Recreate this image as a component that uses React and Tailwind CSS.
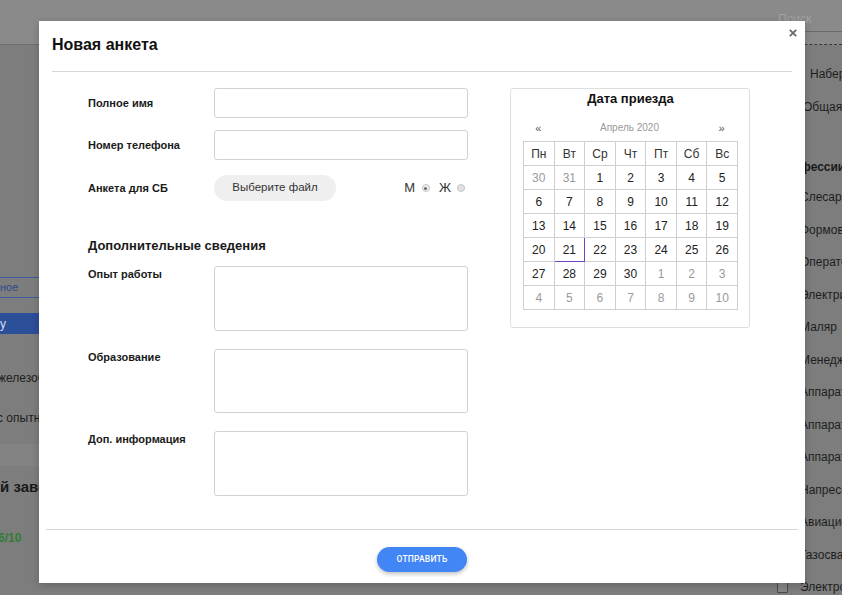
import React from "react";

const weeks = [
  [[30, 1], [31, 1], [1], [2], [3], [4], [5]],
  [[6], [7], [8], [9], [10], [11], [12]],
  [[13], [14], [15], [16], [17], [18], [19]],
  [[20], [21, 0, 1], [22], [23], [24], [25], [26]],
  [[27], [28], [29], [30], [1, 1], [2, 1], [3, 1]],
  [[4, 1], [5, 1], [6, 1], [7, 1], [8, 1], [9, 1], [10, 1]],
];
const dayNames = ["Пн", "Вт", "Ср", "Чт", "Пт", "Сб", "Вс"];
const jobs = [
  "Слесарь",
  "Формовщик",
  "Оператор",
  "Электрик",
  "Маляр",
  "Менеджер",
  "Аппаратчик",
  "Аппаратчик",
  "Аппаратчик",
  "Напрессовщик",
  "Авиационный",
  "Газосварщик",
  "Электромонтер",
];

function Calendar() {
  return (
    <div className="w-[240px] h-[240px] border border-[#dedede] rounded-[3px] pl-[12px] flex flex-col">
      <div className="mt-[1px] h-[18px] leading-[18px] text-center text-[13px] font-bold text-[#111] w-[215px]">
        Дата приезда
      </div>
      <div className="mt-[13px] h-[14px] grid grid-cols-7 w-[215px] items-center leading-[14px]">
        <div className="text-center text-[11px] text-[#555]">«</div>
        <div className="col-span-5 text-center text-[10px] text-[#999] -ml-[2px]">Апрель 2020</div>
        <div className="text-center text-[11px] text-[#555] -ml-[2px]">»</div>
      </div>
      <div className="mt-[6px] w-[215px] grid grid-cols-7 border-l border-t border-[#cfcfcf]">
        {dayNames.map((d) => (
          <div
            key={d}
            className="h-[24px] border-r border-b border-[#cfcfcf] flex items-center justify-center text-[12px] text-[#333]"
          >
            {d}
          </div>
        ))}
        {weeks.flat().map(([n, other, today], i) => (
          <div
            key={i}
            className={
              "h-[24px] border-r border-b flex items-center justify-center text-[12px] " +
              (today ? "border-[#7044c4] " : "border-[#cfcfcf] ") +
              (other ? "text-[#9a9a9a]" : "text-[#222]")
            }
          >
            {n}
          </div>
        ))}
      </div>
    </div>
  );
}

function Field({ label, children, className = "" }) {
  return (
    <div className={"flex items-center " + className}>
      <div className="w-[126px] text-[11px] font-bold text-[#1a1a1a]">{label}</div>
      {children}
    </div>
  );
}

function AreaField({ label, h, className = "" }) {
  return (
    <div className={"flex items-start " + className}>
      <div className="w-[126px] text-[11px] leading-[16px] font-bold text-[#1a1a1a]">{label}</div>
      <div className={"w-[254px] border border-[#d2d2d2] rounded-[3px] " + h}></div>
    </div>
  );
}

export default function App() {
  return (
    <div className="relative w-[842px] h-[595px] overflow-hidden bg-[#7d7d7d] font-['Liberation_Sans',Arial,sans-serif]">
      {/* background page (dimmed) */}
      <div className="flex h-full">
        <div className="flex-1 flex flex-col min-w-0">
          <div className="h-[45px] shrink-0 bg-[#8a8a8a] border-b border-[#6f6f6f]"></div>
          <div className="flex flex-col whitespace-nowrap">
            <div className="mt-[232px] h-[21px] border-y border-[#3d5b9e] flex items-center text-[11px] text-[#2e4a8a]">
              ное
            </div>
            <div className="mt-[15px] h-[21px] bg-[#2c4f9a] flex items-center text-[12px] text-[#d8def0]">
              у
            </div>
            <div className="mt-[36px] h-[16px] leading-[16px] text-[12px] text-[#1d1d1d] -ml-[2px]">
              железобетон
            </div>
            <div className="mt-[24px] h-[16px] leading-[16px] text-[12px] text-[#1d1d1d] -ml-[3px]">
              с опытным
            </div>
            <div className="mt-[18px] h-[22px] bg-[#838383]"></div>
            <div className="mt-[12px] h-[18px] leading-[18px] text-[15px] font-bold text-[#1a1a1a]">
              й завод
            </div>
            <div className="mt-[34px] h-[16px] leading-[16px] text-[12px] font-bold text-[#2f7d32] -ml-[2px]">
              6/10
            </div>
          </div>
        </div>
        <div className="w-[72px] shrink-0 flex flex-col whitespace-nowrap overflow-hidden">
          <div className="h-[45px] shrink-0 bg-[#8a8a8a] border-b border-dashed border-[#3a3a3a] pl-[8px] pt-[8px]">
            <div className="h-[24px] border-b border-[#6a6a6a] text-[12px] leading-[22px] text-[#a3a3a3]">
              Поиск
            </div>
          </div>
          <div className="mt-[21px] pl-[40px] h-[16px] leading-[16px] text-[12px] text-[#1d1d1d]">
            Набережные Челны
          </div>
          <div className="mt-[17px] pl-[33px] h-[16px] leading-[16px] text-[12px] text-[#1d1d1d]">
            Общая
          </div>
          <div className="mt-[44px] pl-[7px] h-[16px] leading-[16px] text-[12px] font-bold text-[#1a1a1a]">
            Профессии
          </div>
          <div className="mt-[5.75px] flex flex-col">
            {jobs.map((j, i) => (
              <div key={i} className="h-[32.5px] flex items-center pl-[7px] gap-[12px]">
                <span className="w-[11px] h-[11px] border border-[#4a4a4a] rounded-[1px] bg-[#858585] shrink-0"></span>
                <span className="text-[12px] text-[#1d1d1d]">{j}</span>
              </div>
            ))}
          </div>
        </div>
      </div>

      {/* modal */}
      <div className="absolute left-[39px] top-[21px] w-[766px] h-[562px] bg-white flex flex-col shadow-[0_2px_8px_rgba(0,0,0,0.2)]">
        <button className="absolute top-[8px] right-[8px] w-[8px] h-[8px]">
          <svg width="8" height="8" viewBox="0 0 8 8">
            <path d="M0.8 0.8L7.2 7.2M7.2 0.8L0.8 7.2" stroke="#6a6a6a" strokeWidth="1.8" />
          </svg>
        </button>
        <div className="mx-[13px] h-[51px] pt-[14px] border-b border-[#d6d6d6]">
          <div className="text-[16px] leading-[20px] font-bold text-[#111]">Новая анкета</div>
        </div>

        <div className="flex-1 flex pl-[49px] pt-[16px] gap-[42px]">
          <div className="w-[380px] flex flex-col">
            <Field label="Полное имя">
              <div className="w-[254px] h-[30px] border border-[#d2d2d2] rounded-[3px]"></div>
            </Field>
            <Field label="Номер телефона" className="mt-[12px]">
              <div className="w-[254px] h-[30px] border border-[#d2d2d2] rounded-[3px]"></div>
            </Field>
            <Field label="Анкета для СБ" className="mt-[15px] h-[26px]">
              <div className="w-[254px] flex items-center justify-between pr-[3px]">
                <div className="w-[122px] h-[26px] rounded-full bg-[#efefef] flex items-center justify-center text-[11.5px] text-[#333]">
                  Выберите файл
                </div>
                <div className="flex items-center text-[13px] text-[#333]">
                  <span>М</span>
                  <span className="ml-[7px] w-[8px] h-[8px] rounded-full border border-[#c4c4c4] bg-[#f0f0f0] flex items-center justify-center">
                    <span className="w-[3px] h-[3px] rounded-full bg-[#666]"></span>
                  </span>
                  <span className="ml-[9px]">Ж</span>
                  <span className="ml-[6px] w-[8px] h-[8px] rounded-full border border-[#c4c4c4] bg-[#e2e2e2]"></span>
                </div>
              </div>
            </Field>
            <div className="mt-[37px] h-[16px] leading-[16px] text-[13px] font-bold text-[#1a1a1a]">
              Дополнительные сведения
            </div>
            <AreaField label="Опыт работы" h="h-[65px]" className="mt-[12px]" />
            <AreaField label="Образование" h="h-[64px]" className="mt-[18px]" />
            <AreaField label="Доп. информация" h="h-[65px]" className="mt-[18px]" />
          </div>
          <Calendar />
        </div>

        <div className="mx-[7px] h-[54px] border-t border-[#d6d6d6] pt-[17px] flex justify-center">
          <button className="w-[90px] h-[25px] rounded-full bg-[#4285f4] text-white text-[8.5px] font-medium font-['Roboto',Arial,sans-serif] tracking-[0.2px] shadow-[0_2px_4px_rgba(0,0,0,0.25)]">
            ОТПРАВИТЬ
          </button>
        </div>
      </div>
    </div>
  );
}
